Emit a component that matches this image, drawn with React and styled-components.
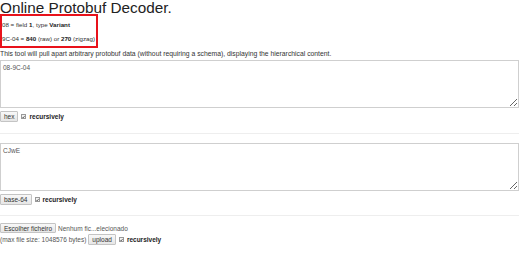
import React from 'react';
import styled, { createGlobalStyle } from 'styled-components';

const Global = createGlobalStyle`
  body {
    margin: 0;
    background: #fff;
    font-family: "Liberation Sans", Arial, sans-serif;
    color: #333;
    font-size: 6.5px;
  }
`;

const Page = styled.div`
  width: 519px;
  display: flex;
  flex-direction: column;
`;

const Title = styled.h1`
  margin: 0;
  font-size: 15.3px;
  font-weight: normal;
  line-height: 16px;
  color: #222;
`;

const Example = styled.div`
  width: 94px;
  margin-top: -2px;
  border: 2px solid #e8121b;
  padding: 5px 0 4px 0;
  display: flex;
  flex-direction: column;
  gap: 7px;
  font-size: 6.2px;
`;

const Line = styled.div`
  line-height: 7px;
  white-space: nowrap;
`;

const Intro = styled.p`
  margin: 2px 0 3px;
  line-height: 7px;
  font-size: 6.8px;
  white-space: nowrap;
`;

const Area = styled.textarea`
  display: block;
  box-sizing: border-box;
  width: 519px;
  height: 48px;
  margin: 0;
  padding: 3px 2px;
  border: 1px solid #cfcfcf;
  font-family: inherit;
  font-size: 6.5px;
  color: #555;
  resize: vertical;
  outline: none;
`;

const Row = styled.div`
  display: flex;
  align-items: center;
  gap: 2px;
  margin-top: ${p => p.top ?? 3}px;
  line-height: 7px;
  white-space: nowrap;
`;

const Button = styled.button`
  box-sizing: border-box;
  height: ${p => p.h || 11}px;
  padding: 0 3px;
  margin: 0;
  border: 1px solid #c4c4c4;
  border-radius: 1px;
  background: linear-gradient(#f8f8f8, #e6e6e6);
  font-family: inherit;
  font-size: 6.5px;
  color: #333;
`;

const Box = styled.span`
  width: 5px;
  height: 5px;
  box-sizing: border-box;
  border: 1px solid #999;
  background: #f2f2f2;
  display: inline-flex;
  align-items: center;
  justify-content: center;
  margin: 0 1px;
`;

const Bold = styled.b`
  font-weight: bold;
  color: #222;
`;

const Muted = styled.span`
  color: #555;
`;

const Rule = styled.hr`
  margin: ${p => p.above}px 0 ${p => p.below}px;
  border: 0;
  border-top: 1px solid #eee;
`;

const Check = () => (
  <Box>
    <svg width="4" height="4" viewBox="0 0 4 4">
      <path d="M0.5 2 L1.6 3.2 L3.6 0.6" stroke="#222" strokeWidth="0.8" fill="none" />
    </svg>
  </Box>
);

const Recursive = () => (
  <>
    <Check />
    <Bold>recursively</Bold>
  </>
);

export default function App() {
  return (
    <>
      <Global />
      <Page>
        <Title>Online Protobuf Decoder.</Title>
        <Example>
          <Line>08 = field <Bold>1</Bold>, type <Bold>Variant</Bold></Line>
          <Line>9C-04 = <Bold>840</Bold> (raw) or <Bold>270</Bold> (zigzag)</Line>
        </Example>
        <Intro>This tool will pull apart arbitrary protobuf data (without requiring a schema), displaying the hierarchical content.</Intro>
        <Area defaultValue="08-9C-04" />
        <Row>
          <Button>hex</Button>
          <Recursive />
        </Row>
        <Rule above={11} below={9} />
        <Area defaultValue="CJwE" />
        <Row>
          <Button>base-64</Button>
          <Recursive />
        </Row>
        <Rule above={10} below={7} />
        <Row top={0}>
          <Button h={10}>Escolher ficheiro</Button>
          <Muted>Nenhum fic...elecionado</Muted>
        </Row>
        <Row top={1}>
          <Muted>(max file size: 1048576 bytes)</Muted>
          <Button>upload</Button>
          <Recursive />
        </Row>
      </Page>
    </>
  );
}
